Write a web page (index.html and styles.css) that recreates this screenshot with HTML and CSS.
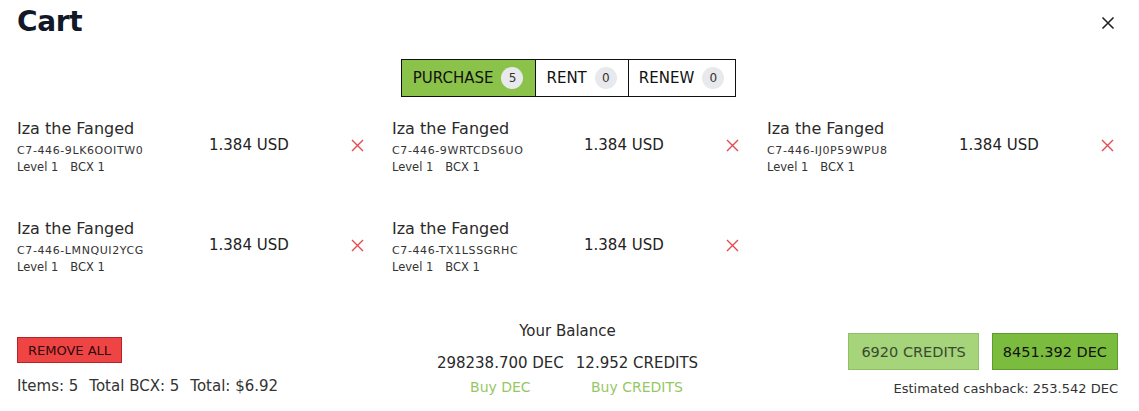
FILE: index.html
```html
<!DOCTYPE html>
<html>
<head>
<meta charset="utf-8">
<link rel="stylesheet" href="styles.css">
</head>
<body>
<div class="modal">
  <header class="head">
    <h1 class="title">Cart</h1>
    <button class="close" aria-label="Close">
      <svg width="14" height="14" viewBox="0 0 14 14"><path d="M1.5 1.5L12.5 12.5M12.5 1.5L1.5 12.5" stroke="#222" stroke-width="1.6" fill="none"/></svg>
    </button>
  </header>
  <nav class="tabs">
    <div class="tab active">PURCHASE <span class="badge">5</span></div>
    <div class="tab">RENT <span class="badge">0</span></div>
    <div class="tab">RENEW <span class="badge">0</span></div>
  </nav>
  <section class="items">
    <div class="item">
      <div class="info"><div class="name">Iza the Fanged</div><div class="uid">C7-446-9LK6OOITW0</div><div class="meta"><span>Level 1</span><span>BCX 1</span></div></div>
      <div class="price">1.384 USD</div>
      <svg class="rm" width="13" height="13" viewBox="0 0 13 13"><path d="M1 1L12 12M12 1L1 12" stroke="#e5484d" stroke-width="1.4" fill="none"/></svg>
    </div>
    <div class="item">
      <div class="info"><div class="name">Iza the Fanged</div><div class="uid">C7-446-9WRTCDS6UO</div><div class="meta"><span>Level 1</span><span>BCX 1</span></div></div>
      <div class="price">1.384 USD</div>
      <svg class="rm" width="13" height="13" viewBox="0 0 13 13"><path d="M1 1L12 12M12 1L1 12" stroke="#e5484d" stroke-width="1.4" fill="none"/></svg>
    </div>
    <div class="item">
      <div class="info"><div class="name">Iza the Fanged</div><div class="uid">C7-446-IJ0P59WPU8</div><div class="meta"><span>Level 1</span><span>BCX 1</span></div></div>
      <div class="price">1.384 USD</div>
      <svg class="rm" width="13" height="13" viewBox="0 0 13 13"><path d="M1 1L12 12M12 1L1 12" stroke="#e5484d" stroke-width="1.4" fill="none"/></svg>
    </div>
    <div class="item">
      <div class="info"><div class="name">Iza the Fanged</div><div class="uid">C7-446-LMNQUI2YCG</div><div class="meta"><span>Level 1</span><span>BCX 1</span></div></div>
      <div class="price">1.384 USD</div>
      <svg class="rm" width="13" height="13" viewBox="0 0 13 13"><path d="M1 1L12 12M12 1L1 12" stroke="#e5484d" stroke-width="1.4" fill="none"/></svg>
    </div>
    <div class="item">
      <div class="info"><div class="name">Iza the Fanged</div><div class="uid">C7-446-TX1LSSGRHC</div><div class="meta"><span>Level 1</span><span>BCX 1</span></div></div>
      <div class="price">1.384 USD</div>
      <svg class="rm" width="13" height="13" viewBox="0 0 13 13"><path d="M1 1L12 12M12 1L1 12" stroke="#e5484d" stroke-width="1.4" fill="none"/></svg>
    </div>
  </section>
  <footer class="foot">
    <div class="left">
      <button class="remove">REMOVE ALL</button>
      <div class="totals"><span>Items: 5</span><span>Total BCX: 5</span><span>Total: $6.92</span></div>
    </div>
    <div class="center">
      <div class="bal-title">Your Balance</div>
      <div class="bal-row">
        <div class="bal-col"><span class="bal-val">298238.700 DEC</span><span class="buy">Buy DEC</span></div>
        <div class="bal-col"><span class="bal-val">12.952 CREDITS</span><span class="buy">Buy CREDITS</span></div>
      </div>
    </div>
    <div class="right">
      <div class="pay">
        <button class="pay-credits">6920 CREDITS</button>
        <button class="pay-dec">8451.392 DEC</button>
      </div>
      <div class="cashback">Estimated cashback: 253.542 DEC</div>
    </div>
  </footer>
</div>
</body>
</html>
```
FILE: styles.css
```css
* { box-sizing: border-box; }
html, body { margin: 0; padding: 0; background: #fff; }
body { font-family: "DejaVu Sans", "Noto Sans", sans-serif; color: #2a2a2a; }
.modal { width: 1139px; height: 411px; padding: 0 21px 0 17px; }
.head { display: flex; justify-content: space-between; align-items: flex-start; height: 59px; }
.title { margin: 4px 0 0; font-size: 28px; font-weight: 700; color: #111827; line-height: 36px; letter-spacing: -0.3px; }
.close { border: 0; background: none; padding: 0; margin: 16px 3px 0 0; width: 14px; height: 14px; display: flex; }
.tabs { display: flex; justify-content: center; padding-left: 2px; }
.tab { display: flex; align-items: center; gap: 8px; height: 38px; padding: 0 11px 0 10px; border: 1px solid #111; font-size: 15px; color: #111; }
.tab.active { padding: 0 12px 0 11px; background: #8bc34a; }
.tab + .tab { border-left: 0; }
.badge { display: inline-flex; align-items: center; justify-content: center; width: 22px; height: 22px; border-radius: 50%; background: #e8e9ec; font-size: 12px; color: #333; }
.items { display: grid; grid-template-columns: repeat(3, 375px); grid-auto-rows: 100px; margin-top: 21px; }
.item { display: flex; align-items: flex-start; }
.info { width: 192px; }
.name { font-size: 16px; line-height: 22px; color: #2a2a2a; }
.uid { font-size: 11px; line-height: 16px; letter-spacing: 0.6px; color: #333; margin-top: 3px; }
.meta { font-size: 11.5px; line-height: 16px; color: #333; display: flex; gap: 12px; }
.price { width: 142px; font-size: 15px; line-height: 20px; margin-top: 17px; color: #222; }
.rm { margin-top: 21px; }
.foot { display: grid; grid-template-columns: 1fr auto 1fr; margin-top: 2px; }
.left { padding-top: 17px; }
.remove { display: block; background: #ef4444; border: 1px solid #b4232a; color: #2b0b0b; font-family: inherit; font-size: 13px; height: 26px; padding: 0 10px; }
.totals { margin-top: 14px; font-size: 15px; display: flex; gap: 11px; color: #333; }
.center { text-align: center; }
.bal-title { font-size: 15px; line-height: 22px; color: #2a2a2a; }
.bal-row { margin-top: 10px; display: flex; gap: 12px; justify-content: center; }
.bal-col { display: flex; flex-direction: column; align-items: center; }
.bal-val { font-size: 15px; line-height: 22px; }
.buy { margin-top: 3px; font-size: 14px; line-height: 20px; color: #96c764; }
.right { display: flex; flex-direction: column; align-items: flex-end; padding-top: 13px; }
.pay { display: flex; gap: 13px; }
.pay button { height: 37px; font-family: inherit; font-size: 14.5px; }
.pay-credits { background: #a5d47b; border: 1px solid #8fc063; color: #3a4a30; padding: 0 12px; }
.pay-dec { background: #7bbc3f; border: 1px solid #5f9a2c; color: #111; padding: 0 10px; }
.cashback { margin-top: 11px; font-size: 13px; color: #333; }
```
